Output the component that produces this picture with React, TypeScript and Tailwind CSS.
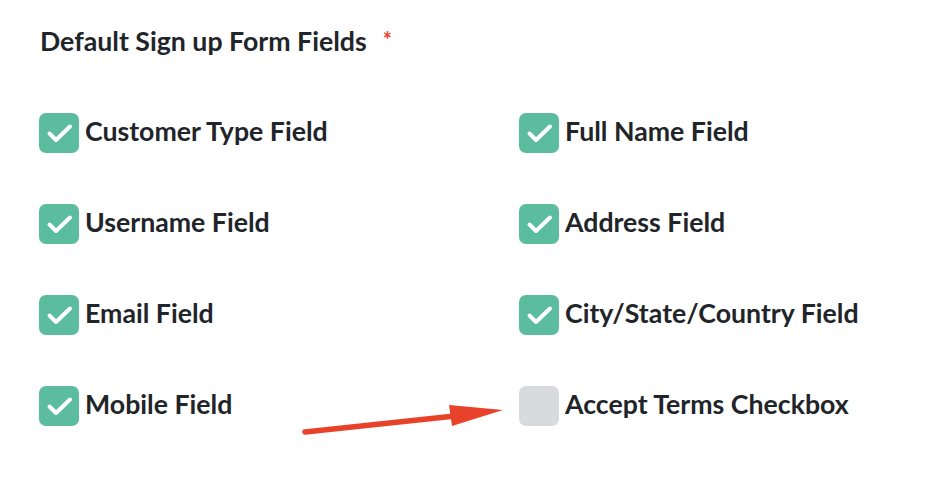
import React from 'react';

const LEFT_FIELDS = [
  { label: 'Customer Type Field', checked: true },
  { label: 'Username Field', checked: true },
  { label: 'Email Field', checked: true },
  { label: 'Mobile Field', checked: true },
];

const RIGHT_FIELDS = [
  { label: 'Full Name Field', checked: true },
  { label: 'Address Field', checked: true },
  { label: 'City/State/Country Field', checked: true },
  { label: 'Accept Terms Checkbox', checked: false },
];

function FieldCheckbox({ label, checked }: { label: string; checked: boolean }) {
  return (
    <label className="flex items-center gap-[6px] h-10">
      <span
        className={
          checked
            ? 'w-10 h-10 rounded-[7px] bg-[#5bbd9e] shrink-0'
            : 'w-10 h-10 rounded-[7px] bg-[#d8dbde] shrink-0'
        }
      >
        {checked && (
          <svg width="40" height="40" viewBox="0 0 40 40" fill="none">
            <path d="M10.5 20.5l6.5 6.5 14-13.5" stroke="#fff" strokeWidth="4" strokeLinecap="round" strokeLinejoin="round" />
          </svg>
        )}
      </span>
      <span className="text-[26.7px] font-bold text-[#212529] leading-none -mt-[4px]">{label}</span>
    </label>
  );
}

export default function App() {
  return (
    <div className="w-[950px] h-[490px] bg-white relative" style={{ fontFamily: 'Lato, "Open Sans", sans-serif' }}>
      <div className="pl-[39px] pt-[26px]">
        <h2 className="flex items-center text-[26.7px] font-bold text-[#212529] leading-[30px] pl-px">
          Default Sign up Form Fields
          <span className="ml-[16px] text-[22px] font-bold text-[#e8432a] leading-none -mt-[2px]">*</span>
        </h2>

        <div className="grid grid-cols-[480px_1fr] mt-[57px]">
          <div className="flex flex-col gap-[51px]">
            {LEFT_FIELDS.map(f => (
              <FieldCheckbox key={f.label} {...f} />
            ))}
          </div>
          <div className="flex flex-col gap-[51px]">
            {RIGHT_FIELDS.map(f => (
              <FieldCheckbox key={f.label} {...f} />
            ))}
          </div>
        </div>
      </div>

      {/* annotation arrow */}
      <svg className="absolute left-0 top-0 pointer-events-none" width="950" height="490">
        <line x1="305" y1="432" x2="455" y2="416" stroke="#e8432a" strokeWidth="5.5" strokeLinecap="round" />
        <polygon points="449,405 503,410 452,426" fill="#e8432a" />
      </svg>
    </div>
  );
}
